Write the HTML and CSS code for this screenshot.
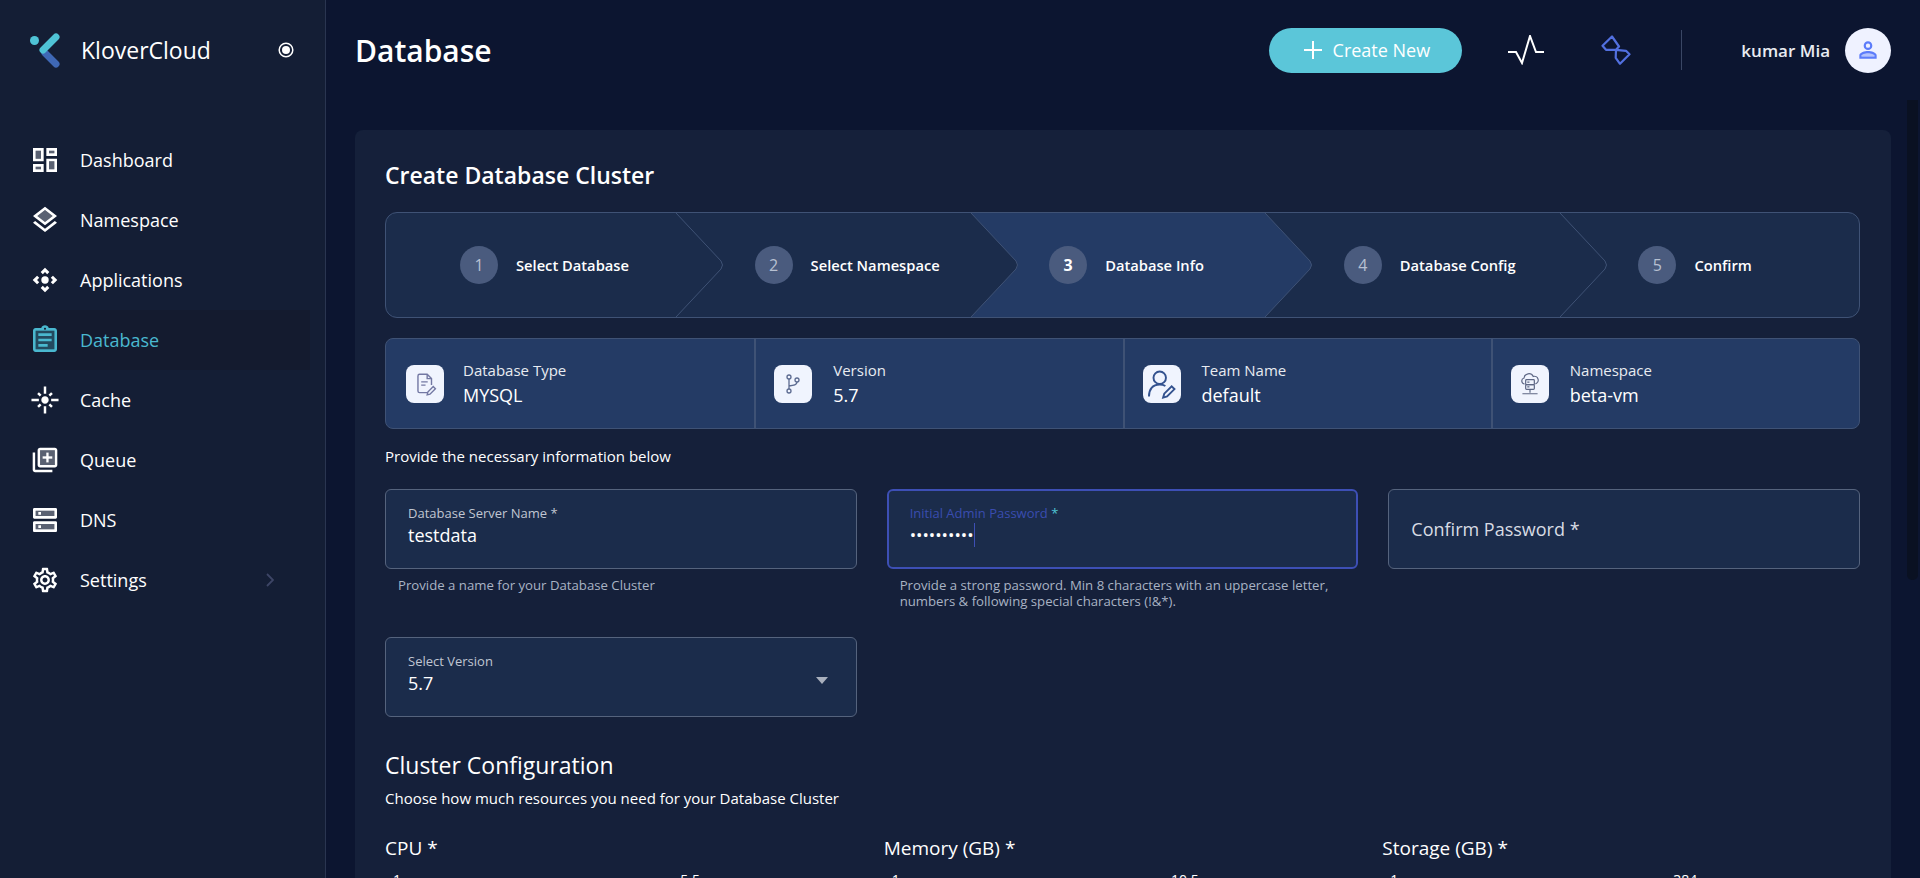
FILE: index.html
```html
<!DOCTYPE html>
<html lang="en">
<head>
  <meta charset="UTF-8">
  <title>Create Database Cluster</title>
  <link rel="stylesheet" href="styles.css">
</head>
<body>
<div class="layout">
  <aside class="sidebar">
    <div class="brand">
      <svg class="brand-logo" viewBox="0 0 32 36" width="32" height="36">
        <circle cx="4.5" cy="8.5" r="4.5" fill="#4fc3d6"/>
        <path d="M15 25L26 36" transform="translate(0 -4)" stroke="#3f68b5" stroke-width="7" stroke-linecap="round"/>
        <path d="M26 4L13 17" transform="translate(0 1)" stroke="#4fc3d6" stroke-width="7" stroke-linecap="round"/>
      </svg>
      <span class="brand-name">KloverCloud</span>
      <svg class="brand-pin" viewBox="0 0 16 16" width="16" height="16">
        <circle cx="8" cy="8" r="6.8" fill="none" stroke="#fff" stroke-width="1.5"/>
        <circle cx="8" cy="8" r="4" fill="#fff"/>
      </svg>
    </div>
    <nav class="nav">
      <a class="nav-item">
        <svg viewBox="0 0 24 24"><path opacity=".3" d="M5 5h4v6H5zm10 8h4v6h-4zM5 17h4v2H5zM15 5h4v2h-4z"/><path d="M3 13h8V3H3v10zm2-8h4v6H5V5zm8 16h8V11h-8v10zm2-8h4v6h-4v-6zM13 3v6h8V3h-8zm6 4h-4V5h4v2zM3 21h8v-6H3v6zm2-4h4v2H5v-2z"/></svg>
        Dashboard
      </a>
      <a class="nav-item">
        <svg viewBox="0 0 24 24"><path opacity=".3" d="M6.26 9L12 13.47 17.74 9 12 4.53z"/><path d="M19.37 12.8l-7.38 5.74-7.37-5.73L3 14.07l9 7 9-7zM12 2L3 9l1.63 1.27L12 16l7.36-5.73L21 9l-9-7zm0 11.47L6.26 9 12 4.53 17.74 9 12 13.47z"/></svg>
        Namespace
      </a>
      <a class="nav-item">
        <svg viewBox="-1 -1 26 26"><path d="M15.54 5.54L13.77 7.3 12 5.54 10.23 7.3 8.46 5.54 12 2zm2.92 10l-1.76-1.77L18.46 12l-1.76-1.77 1.76-1.77L22 12zm-10 2.92l1.77-1.76L12 18.46l1.77-1.76 1.77 1.76L12 22zm-2.92-10l1.76 1.77L5.54 12l1.76 1.77-1.76 1.77L2 12z"/><circle cx="12" cy="12" r="3"/></svg>
        Applications
      </a>
      <a class="nav-item active">
        <svg viewBox="0 0 24 24"><path opacity=".3" d="M5 5h14v14H5z"/><path d="M19 3h-4.18C14.4 1.84 13.3 1 12 1s-2.4.84-2.82 2H5c-1.1 0-2 .9-2 2v14c0 1.1.9 2 2 2h14c1.1 0 2-.9 2-2V5c0-1.1-.9-2-2-2zm-7-.25c.41 0 .75.34.75.75s-.34.75-.75.75-.75-.34-.75-.75.34-.75.75-.75zM19 19H5V5h14v14zM7 15h7v2H7zm0-4h10v2H7zm0-4h10v2H7z"/></svg>
        Database
      </a>
      <a class="nav-item">
        <svg viewBox="-1 -1 26 26"><path d="M7 11H1v2h6v-2zm2.17-3.24L7.05 5.64 5.64 7.05l2.12 2.12 1.41-1.41zM13 1h-2v6h2V1zm5.36 6.05l-1.41-1.41-2.12 2.12 1.41 1.41 2.12-2.12zM17 11v2h6v-2h-6zm-5-2c-1.66 0-3 1.34-3 3s1.34 3 3 3 3-1.34 3-3-1.34-3-3-3zm2.83 7.24l2.12 2.12 1.41-1.41-2.12-2.12-1.41 1.41zm-9.19.71l1.41 1.41 2.12-2.12-1.41-1.41-2.12 2.12zM11 23h2v-6h-2v6z"/></svg>
        Cache
      </a>
      <a class="nav-item">
        <svg viewBox="-1 -1 26 26"><path opacity=".3" d="M8 16h12V4H8v12zm2-7h3V6h2v3h3v2h-3v3h-2v-3h-3V9z"/><path d="M4 6H2v14c0 1.1.9 2 2 2h14v-2H4V6zm16-4H8c-1.1 0-2 .9-2 2v12c0 1.1.9 2 2 2h12c1.1 0 2-.9 2-2V4c0-1.1-.9-2-2-2zm0 14H8V4h12v12zm-5-2h-2v-3h-3V9h3V6h2v3h3v2h-3z"/></svg>
        Queue
      </a>
      <a class="nav-item">
        <svg viewBox="0 0 24 24"><path opacity=".3" d="M5 15h14v4H5zM5 5h14v4H5z"/><path d="M20 13H4c-.55 0-1 .45-1 1v6c0 .55.45 1 1 1h16c.55 0 1-.45 1-1v-6c0-.55-.45-1-1-1zm-1 6H5v-4h14v4zm-12-1h2v-2H7v2zM20 3H4c-.55 0-1 .45-1 1v6c0 .55.45 1 1 1h16c.55 0 1-.45 1-1V4c0-.55-.45-1-1-1zm-1 6H5V5h14v4zM7 8h2V6H7v2z"/></svg>
        DNS
      </a>
      <a class="nav-item">
        <svg viewBox="-1 -1 26 26"><path d="M19.43 12.98c.04-.32.07-.64.07-.98s-.03-.66-.07-.98l2.11-1.65c.19-.15.24-.42.12-.64l-2-3.46c-.12-.22-.39-.3-.61-.22l-2.49 1c-.52-.4-1.08-.73-1.69-.98l-.38-2.65C14.46 2.18 14.25 2 14 2h-4c-.25 0-.46.18-.49.42l-.38 2.65c-.61.25-1.17.59-1.69.98l-2.49-1c-.23-.09-.49 0-.61.22l-2 3.46c-.13.22-.07.49.12.64l2.11 1.65c-.04.32-.07.65-.07.98s.03.66.07.98l-2.11 1.65c-.19.15-.24.42-.12.64l2 3.46c.12.22.39.3.61.22l2.49-1c.52.4 1.08.73 1.69.98l.38 2.65c.03.24.24.42.49.42h4c.25 0 .46-.18.49-.42l.38-2.65c.61-.25 1.17-.59 1.69-.98l2.49 1c.23.09.49 0 .61-.22l2-3.46c.12-.22.07-.49-.12-.64l-2.11-1.65zm-1.98-1.71c.04.31.05.52.05.73 0 .21-.02.43-.05.73l-.14 1.13.89.7 1.08.84-.7 1.21-1.27-.51-1.04-.42-.9.68c-.43.32-.84.56-1.25.73l-1.06.43-.16 1.13-.2 1.35h-1.4l-.19-1.35-.16-1.13-1.06-.43c-.43-.18-.83-.41-1.23-.71l-.91-.7-1.06.43-1.27.51-.7-1.21 1.08-.84.89-.7-.14-1.13c-.03-.31-.05-.54-.05-.74s.02-.43.05-.73l.14-1.13-.89-.7-1.08-.84.7-1.21 1.27.51 1.04.42.9-.68c.43-.32.84-.56 1.25-.73l1.06-.43.16-1.13.2-1.35h1.39l.19 1.35.16 1.13 1.06.43c.43.18.83.41 1.23.71l.91.7 1.06-.43 1.27-.51.7 1.21-1.07.85-.89.7.14 1.13zM12 8c-2.21 0-4 1.79-4 4s1.79 4 4 4 4-1.79 4-4-1.79-4-4-4zm0 6c-1.1 0-2-.9-2-2s.9-2 2-2 2 .9 2 2-.9 2-2 2z"/></svg>
        Settings
        <svg class="nav-arrow" viewBox="0 0 8 14"><path d="M1 1l6 6-6 6" fill="none" stroke="#3d4566" stroke-width="1.8"/></svg>
      </a>
    </nav>
  </aside>

  <main class="main">
    <header class="topbar">
      <h1 class="page-title">Database</h1>
      <button type="button" class="create-btn">
        <svg viewBox="0 0 18 18" width="18" height="18"><path d="M9 0v18M0 9h18" stroke="#fff" stroke-width="2"/></svg>
        Create New
      </button>
      <svg class="pulse" viewBox="0 0 36 30" width="36" height="30"><path d="M0 17h8l6 11L22 1l6 16h8" fill="none" stroke="#fff" stroke-width="2"/></svg>
      <svg class="shape" viewBox="0 0 30 30" width="30" height="30"><path d="M11 1.5l7 10-3 3.3H5L1.5 10.8zM15 14.8l10 1 3.5 3.5-9.5 9.5-4.300-6z" fill="none" stroke="#5270e0" stroke-width="2.200" stroke-linejoin="round"/></svg>
      <span class="top-divider"></span>
      <span class="user-name">kumar Mia</span>
      <span class="avatar">
        <svg viewBox="0 0 24 24" width="26" height="26"><path opacity=".4" fill="#5c7cfa" d="M6 18v-1c0-2 4-3.200 6-3.200s6 1.200 6 3.200v1z"/><path fill="#5c7cfa" d="M12 4a4 4 0 1 0 0 8 4 4 0 0 0 0-8zm0 2a2 2 0 1 1 0 4 2 2 0 0 1 0-4zm0 7c-2.700 0-8 1.300-8 4v3h16v-3c0-2.700-5.300-4-8-4zm-6 5v-1c0-.6 3.100-2 6-2s6 1.400 6 2v1z"/></svg>
      </span>
    </header>

    <section class="card">
      <h2 class="card-title">Create Database Cluster</h2>

      <div class="stepper">
        <svg class="stepper-lines" viewBox="0 0 1473 104" width="1473" height="104">
          <path d="M585 0L630 48Q633 52 630 56L585 104H879L924 56Q927 52 924 48L879 0z" fill="#243b65"/>
          <g fill="none" stroke="#3f5275" stroke-width="1">
            <path d="M290 0L335 48Q338 52 335 56L290 104"/>
            <path d="M585 0L630 48Q633 52 630 56L585 104"/>
            <path d="M879 0L924 48Q927 52 924 56L879 104"/>
            <path d="M1174 0L1219 48Q1222 52 1219 56L1174 104"/>
          </g>
        </svg>
        <div class="step"><span class="step-num">1</span>Select Database</div>
        <div class="step"><span class="step-num">2</span>Select Namespace</div>
        <div class="step current"><span class="step-num">3</span>Database Info</div>
        <div class="step"><span class="step-num">4</span>Database Config</div>
        <div class="step"><span class="step-num">5</span>Confirm</div>
      </div>

      <div class="summary">
        <div class="summary-item">
          <span class="summary-icon">
            <svg viewBox="0 0 24 24" width="26" height="26" fill="none" stroke="#7378a3" stroke-width="1.300"><path d="M14 20H7a1.500 1.500 0 0 1-1.500-1.500v-14A1.500 1.500 0 0 1 7 3h7l4 4v6"/><path d="M14 3v4h4M8.500 10h6M8.500 13h4"/><path d="M14 22l.6-2.600 5-5 2 2-5 5z"/></svg>
          </span>
          <div><div class="summary-label">Database Type</div><div class="summary-value">MYSQL</div></div>
        </div>
        <div class="summary-item">
          <span class="summary-icon">
            <svg viewBox="0 0 24 24" width="24" height="24" fill="none" stroke="#5b6a90" stroke-width="1.300"><circle cx="8" cy="5" r="2"/><circle cx="8" cy="19" r="2"/><circle cx="16" cy="8" r="2"/><path d="M8 7v10M16 10c0 3-3 3.500-8 4"/></svg>
          </span>
          <div><div class="summary-label">Version</div><div class="summary-value">5.7</div></div>
        </div>
        <div class="summary-item">
          <span class="summary-icon">
            <svg viewBox="0 0 30 30" width="34" height="34" fill="none" stroke="#33528f" stroke-width="1.700"><circle cx="13" cy="9.500" r="5.500"/><path d="M3.500 26c0-6 3-10.500 9.500-10.500 2 0 3.500.4 5 1.300"/><path d="M16 27l1-3.500 6.500-6.500 2.500 2.500-6.500 6.500z"/></svg>
          </span>
          <div><div class="summary-label">Team Name</div><div class="summary-value">default</div></div>
        </div>
        <div class="summary-item">
          <span class="summary-icon">
            <svg viewBox="0 0 24 24" width="26" height="26" fill="none" stroke="#5d6785" stroke-width="1.100"><path d="M7 12a2.800 2.800 0 0 1-.5-5.500A4.500 4.500 0 0 1 15 5a3.500 3.500 0 0 1 2 6.900"/><rect x="8" y="8" width="8" height="4.500" rx=".8"/><rect x="8" y="12.500" width="8" height="4.500" rx=".8"/><path d="M12 17v3M5 21h14M9.500 10.200h2M9.500 14.700h2"/></svg>
          </span>
          <div><div class="summary-label">Namespace</div><div class="summary-value">beta-vm</div></div>
        </div>
      </div>

      <p class="note">Provide the necessary information below</p>

      <div class="form-grid">
        <div>
          <div class="field">
            <div class="field-label">Database Server Name *</div>
            <div class="field-value">testdata</div>
          </div>
          <p class="helper">Provide a name for your Database Cluster</p>
        </div>
        <div>
          <div class="field focused">
            <div class="field-label">Initial Admin Password <span class="req">*</span></div>
            <div class="field-value dots">••••••••••<span class="caret"></span></div>
          </div>
          <p class="helper">Provide a strong password. Min 8 characters with an uppercase letter, numbers &amp; following special characters (!&amp;*).</p>
        </div>
        <div>
          <div class="field empty">Confirm Password *</div>
        </div>
        <div>
          <div class="field select">
            <div>
              <div class="field-label">Select Version</div>
              <div class="field-value">5.7</div>
            </div>
            <span class="select-arrow"></span>
          </div>
        </div>
      </div>

      <h2 class="section-title">Cluster Configuration</h2>
      <p class="section-sub">Choose how much resources you need for your Database Cluster</p>

      <div class="resources">
        <div>
          <div class="resource-label">CPU *</div>
          <div class="resource-range"><span>1</span><span>5.5</span></div>
        </div>
        <div>
          <div class="resource-label">Memory (GB) *</div>
          <div class="resource-range"><span>1</span><span>10.5</span></div>
        </div>
        <div>
          <div class="resource-label">Storage (GB) *</div>
          <div class="resource-range"><span>1</span><span>384</span></div>
        </div>
      </div>
    </section>
    <div class="scroll-thumb"></div>
  </main>
</div>
</body>
</html>
```
FILE: styles.css
```css
* {
  box-sizing: border-box;
}
html, body {
  height: 100%;
}
body {
  margin: 0;
  font-family: "Open Sans", "Noto Sans", sans-serif;
  background-color: #0c1530;
  color: #fff;
  overflow: hidden;
}
.layout {
  display: flex;
  height: 878px;
}

/* sidebar */
.sidebar {
  width: 326px;
  flex-shrink: 0;
  background-color: #141e35;
  border-right: 1px solid #2a3550;
}
.brand {
  display: flex;
  align-items: center;
  height: 100px;
  padding-left: 30px;
}
.brand-logo {
  flex-shrink: 0;
}
.brand-name {
  margin-left: 19px;
  font-size: 23px;
  line-height: 100px;
}
.brand-pin {
  margin-left: 67px;
}
.nav {
  padding-top: 30px;
}
.nav-item {
  display: flex;
  align-items: center;
  gap: 19px;
  width: 310px;
  height: 60px;
  padding-left: 29px;
  font-size: 18px;
  color: #fff;
  text-decoration: none;
}
.nav-item svg {
  width: 32px;
  height: 32px;
  fill: #fff;
  flex-shrink: 0;
}
.nav-item.active {
  background-color: #141b2f;
  color: #4ab8cf;
}
.nav-item.active svg {
  fill: #4ab8cf;
}
.nav-item .nav-arrow {
  width: 8px;
  height: 14px;
  margin-left: auto;
  margin-right: 36px;
}

/* top bar */
.main {
  position: relative;
  flex: 1;
  min-width: 0;
  padding: 0 29px;
  overflow: hidden;
}
.topbar {
  display: flex;
  align-items: center;
  height: 100px;
}
.page-title {
  margin: 0 auto 0 0;
  font-size: 30px;
  font-weight: 600;
}
.create-btn {
  display: flex;
  align-items: center;
  justify-content: center;
  gap: 11px;
  width: 193px;
  height: 45px;
  padding-left: 8px;
  border: none;
  border-radius: 23px;
  background-color: #5bc6d9;
  color: #fff;
  font-family: inherit;
  font-size: 18px;
  font-weight: 500;
}
.pulse {
  margin-left: 46px;
}
.shape {
  margin-left: 57px;
}
.top-divider {
  width: 1px;
  height: 40px;
  margin-left: 50px;
  background-color: #3a4664;
}
.user-name {
  margin-left: 59px;
  font-size: 17px;
  font-weight: 600;
  color: #e9ebf1;
}
.avatar {
  display: flex;
  align-items: center;
  justify-content: center;
  width: 46px;
  height: 45px;
  margin-left: 15px;
  border-radius: 50%;
  background-color: #eff2ff;
}

/* card */
.card {
  margin-top: 30px;
  padding: 28px 31px 30px 30px;
  background-color: #15203a;
  border-radius: 8px 8px 0 0;
}
.card-title {
  margin: 0 0 20px;
  font-size: 23px;
  line-height: 34px;
  font-weight: 600;
}
.stepper {
  position: relative;
  display: flex;
  height: 106px;
  background-color: #1b2c4b;
  border: 1px solid #3f5275;
  border-radius: 12px;
  overflow: hidden;
}
.stepper-lines {
  position: absolute;
  left: 0;
  top: 0;
}
.step {
  position: relative;
  flex: 1;
  display: flex;
  align-items: center;
  gap: 18px;
  padding-left: 74px;
  font-size: 14.700px;
  font-weight: 600;
}
.step-num {
  display: flex;
  align-items: center;
  justify-content: center;
  width: 38px;
  height: 38px;
  border-radius: 50%;
  background-color: #4a5b7e;
  color: #b7c0d2;
  font-size: 16px;
  font-weight: 400;
}
.step.current .step-num {
  color: #fff;
  font-weight: 700;
}
.summary {
  display: grid;
  grid-template-columns: repeat(4, 1fr);
  height: 91px;
  margin-top: 20px;
  background-color: #243b65;
  border: 1px solid #3f5275;
  border-radius: 8px;
}
.summary-item {
  display: flex;
  align-items: center;
  gap: 21px;
  padding-left: 18px;
  border-left: 2px solid #3f5275;
}
.summary-item:first-child {
  gap: 19px;
  padding-left: 20px;
  border-left: none;
}
.summary-icon {
  display: flex;
  align-items: center;
  justify-content: center;
  width: 38px;
  height: 38px;
  border-radius: 8px;
  background-color: #f0f4fe;
  flex-shrink: 0;
}
.summary-label {
  font-size: 15px;
  line-height: 20px;
  color: #e8ebf1;
}
.summary-value {
  margin-top: 3px;
  font-size: 18px;
  line-height: 25px;
}
.note {
  margin: 17px 0 23px;
  font-size: 15px;
  line-height: 20px;
}

/* form */
.form-grid {
  display: grid;
  grid-template-columns: repeat(3, 1fr);
  column-gap: 30px;
  row-gap: 28px;
}
.field {
  height: 80px;
  padding: 14px 22px 0;
  background-color: #1b2c4b;
  border: 1px solid #55637d;
  border-radius: 6px;
}
.field-label {
  font-size: 13px;
  line-height: 18px;
  color: #c0c6d2;
}
.field-value {
  font-size: 18px;
  line-height: 26px;
}
.field.focused {
  padding: 13px 21px 0;
  border: 2px solid #3d4fb5;
}
.field.focused .field-label {
  color: #3a4cb0;
}
.req {
  color: #4fc3d4;
}
.dots {
  display: flex;
  align-items: center;
  font-size: 17px;
}
.caret {
  width: 1px;
  height: 24px;
  background-color: #3d4fb5;
}
.field.empty {
  display: flex;
  align-items: center;
  padding-top: 0;
  font-size: 18px;
  color: #d8dce4;
}
.field.select {
  display: flex;
  justify-content: space-between;
}
.select-arrow {
  width: 0;
  height: 0;
  margin: 25px 6px 0 0;
  border-left: 6px solid transparent;
  border-right: 6px solid transparent;
  border-top: 7px solid #a9b0bd;
}
.helper {
  margin: 8px 0 0;
  padding-left: 13px;
  font-size: 13.200px;
  line-height: 16px;
  color: #a9b3c4;
}
.section-title {
  margin: 31px 0 6px;
  font-size: 23px;
  line-height: 34px;
  font-weight: 500;
}
.section-sub {
  margin: 0 0 26px;
  font-size: 15px;
  line-height: 20px;
}
.resources {
  display: grid;
  grid-template-columns: repeat(3, 1fr);
  column-gap: 21px;
}
.resource-label {
  font-size: 19px;
  line-height: 28px;
  font-weight: 500;
}
.resource-range {
  display: flex;
  justify-content: space-between;
  width: 315px;
  margin-top: 8px;
  padding-left: 8px;
  font-size: 14px;
  line-height: 20px;
}
.scroll-thumb {
  position: absolute;
  right: 2px;
  top: 100px;
  width: 11px;
  height: 480px;
  background-color: #0a1122;
  border-radius: 0 0 5px 5px;
}
```
